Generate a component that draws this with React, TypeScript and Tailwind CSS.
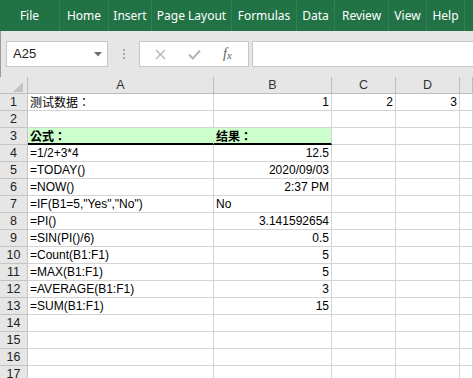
import React from "react";

const tabs: [string, string][] = [
  ["File", "w-[60px]"],
  ["Home", "w-[49px]"],
  ["Insert", "w-[43px]"],
  ["Page Layout", "w-[80px]"],
  ["Formulas", "w-[65px]"],
  ["Data", "w-[38px]"],
  ["Review", "w-[54px]"],
  ["View", "w-[38px]"],
  ["Help", "w-[38px]"],
];

type Cell = { t?: string; r?: boolean; b?: boolean; cjk?: boolean };
const rows: Cell[][] = [
  [{ t: "测试数据：", cjk: true }, { t: "1", r: true }, { t: "2", r: true }, { t: "3", r: true }],
  [],
  [{ t: "公式：", b: true, cjk: true }, { t: "结果：", b: true, cjk: true }],
  [{ t: "=1/2+3*4" }, { t: "12.5", r: true }],
  [{ t: "=TODAY()" }, { t: "2020/09/03", r: true }],
  [{ t: "=NOW()" }, { t: "2:37 PM", r: true }],
  [{ t: '=IF(B1=5,"Yes","No")' }, { t: "No" }],
  [{ t: "=PI()" }, { t: "3.141592654", r: true }],
  [{ t: "=SIN(PI()/6)" }, { t: "0.5", r: true }],
  [{ t: "=Count(B1:F1)" }, { t: "5", r: true }],
  [{ t: "=MAX(B1:F1)" }, { t: "5", r: true }],
  [{ t: "=AVERAGE(B1:F1)" }, { t: "3", r: true }],
  [{ t: "=SUM(B1:F1)" }, { t: "15", r: true }],
  [],
  [],
  [],
  [],
];

const colHeaders = ["A", "B", "C", "D", ""];

export default function App() {
  return (
    <div className="w-[473px] h-[378px] overflow-hidden bg-[#e6e6e6] font-['Liberation_Sans','Noto_Sans_CJK_SC',sans-serif]">
      {/* Ribbon tabs */}
      <div className="flex h-[31px] bg-[#217346] text-white text-[12px] font-['Noto_Sans','Liberation_Sans',sans-serif]">
        {tabs.map(([name, w]) => (
          <div
            key={name}
            className={`${w} shrink-0 flex items-center justify-center border-r border-[#2f8055]`}
          >
            {name}
          </div>
        ))}
        <div className="flex-1" />
      </div>

      {/* Formula bar */}
      <div className="h-[46px] flex items-start pt-[10px] border-l border-[#9a9a9a]">
        <div className="ml-[5px] w-[102px] h-[26px] bg-white border border-[#c6c6c6] flex items-center pl-[6px] pr-[5px] text-[13px] text-[#222]">
          <span className="flex-1">A25</span>
          <svg width="8" height="5" viewBox="0 0 8 5">
            <path d="M0 0 L8 0 L4 4.5 Z" fill="#6e6e6e" />
          </svg>
        </div>
        <div className="w-[31px] h-[26px] flex flex-col items-center justify-center gap-[2px]">
          <div className="w-[2px] h-[2px] bg-[#a8a8a8]" />
          <div className="w-[2px] h-[2px] bg-[#a8a8a8]" />
          <div className="w-[2px] h-[2px] bg-[#a8a8a8]" />
        </div>
        <div className="w-[110px] h-[26px] bg-white border border-[#c6c6c6] flex items-center">
          <div className="w-[38px] flex justify-center pl-[2px]">
            <svg width="11" height="11" viewBox="0 0 11 11">
              <path d="M1 1 L10 10 M10 1 L1 10" stroke="#b4b4b4" strokeWidth="1.4" />
            </svg>
          </div>
          <div className="w-[33px] flex justify-center">
            <svg width="13" height="11" viewBox="0 0 13 11">
              <path d="M1 5.5 L4.8 9.5 L12 1.5" stroke="#b4b4b4" strokeWidth="2" fill="none" />
            </svg>
          </div>
          <div className="flex-1 flex justify-center pr-[4px] font-['Liberation_Serif',serif] italic text-[14px] text-[#606060] leading-none">
            <span>f</span>
            <span className="text-[11px] mt-[3px]">x</span>
          </div>
        </div>
        <div className="ml-[3px] flex-1 h-[26px] bg-white border border-r-0 border-[#c6c6c6]" />
      </div>

      {/* Grid */}
      <div className="grid grid-cols-[28px_186px_118px_64px_64px_1fr] text-[12px] leading-[16px] text-black">
        {/* header row */}
        <div className="h-[17px] border-r border-b border-[#bdbdbd] bg-[#e6e6e6] relative">
          <svg className="absolute right-[4px] bottom-[1px]" width="10" height="10" viewBox="0 0 10 10">
            <path d="M10 0 L10 10 L0 10 Z" fill="#c2c2c2" />
          </svg>
        </div>
        {colHeaders.map((c, i) => (
          <div
            key={i}
            className="h-[17px] border-r border-b border-[#bdbdbd] bg-[#e6e6e6] text-center text-[12.5px] text-[#333]"
          >
            {c}
          </div>
        ))}
        {rows.map((row, ri) => {
          const green = ri === 2;
          return (
            <React.Fragment key={ri}>
              <div className="h-[17px] border-r border-b border-[#c4c4c4] bg-[#e6e6e6] text-center text-[12.5px] text-[#222]">
                {ri + 1}
              </div>
              {[0, 1, 2, 3, 4].map((ci) => {
                const cell = row[ci];
                const isGreen = green && ci < 2;
                const cls = isGreen
                  ? `bg-[#ccffcc] border-b-2 border-b-black ${ci === 0 ? "border-r border-r-[#ccffcc]" : "border-r border-r-[#d4d4d4]"}`
                  : "bg-white border-r border-b border-[#d4d4d4]";
                return (
                  <div
                    key={ci}
                    className={`h-[17px] overflow-visible whitespace-nowrap px-[2px] ${cls} ${cell?.r ? "text-right" : "text-left"} ${cell?.b ? "font-bold" : ""} ${cell?.cjk ? "font-['Noto_Sans_CJK_TC',sans-serif]" : ""}`}
                  >
                    {cell?.t ?? ""}
                  </div>
                );
              })}
            </React.Fragment>
          );
        })}
      </div>
    </div>
  );
}
